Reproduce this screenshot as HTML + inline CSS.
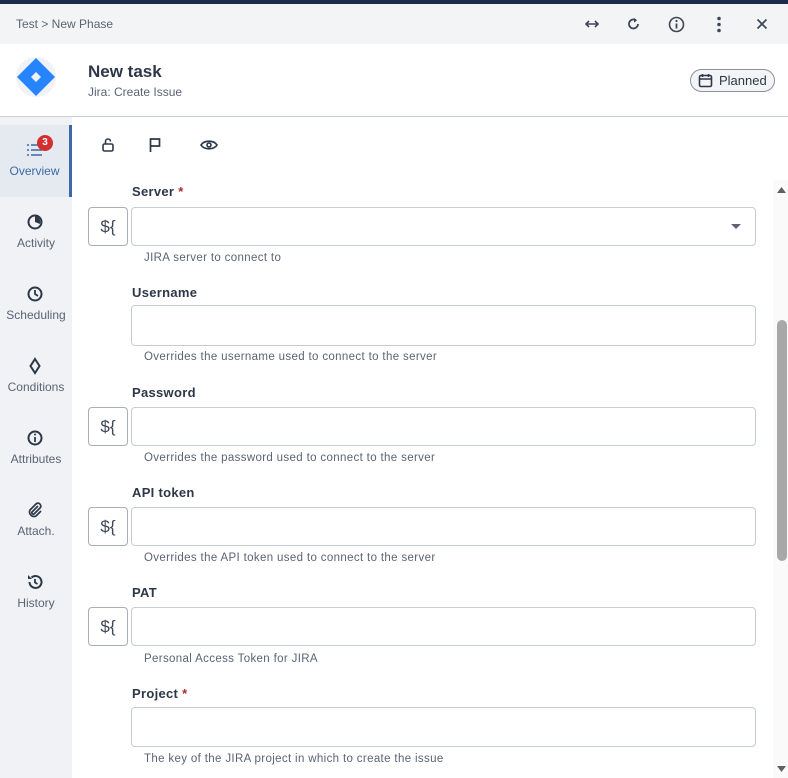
<!DOCTYPE html>
<html><head><style>
*{box-sizing:border-box;margin:0;padding:0}
body{width:788px;height:778px;overflow:hidden;font-family:"Liberation Sans",sans-serif;background:#fff;position:relative;color:#2d3748}
.top{position:absolute;left:0;top:0;width:788px;height:4px;background:#1c2b4b}
.crumb{position:absolute;top:4px;left:0;width:788px;height:40px;background:#f3f4f6;font-size:12px;color:#5a6474}
.crumb span{position:absolute;left:16px;top:13px}
.ic{position:absolute;top:14px}
.hdr{position:absolute;top:44px;left:0;width:788px;height:73px;border-bottom:1px solid #c9ced6;background:#fff}
.logo{position:absolute;left:16px;top:13px;width:40px;height:40px;border-radius:50%;background:#f0f2f5}
.title{position:absolute;left:88px;top:18px;font-size:17px;font-weight:bold;color:#2d3748}
.sub{position:absolute;left:88px;top:41px;font-size:12px;color:#5a6474}
.pill{position:absolute;left:690px;top:25px;width:85px;height:23px;border:1px solid #8a929e;border-radius:12px;background:#f3f4f6;font-size:13px;color:#2d3748}
.side{position:absolute;left:0;top:117px;width:72px;height:661px;background:#f0f2f5}
.item{position:absolute;left:0;width:72px;height:72px;text-align:center;font-size:12px;color:#5a6474}
.item svg{position:absolute;left:26px;top:16px}
.item span{position:absolute;left:0;right:0;top:39px}
.active{background:#e5eaf1;border-right:3px solid #3c68a8}
.lbl{position:absolute;left:132px;font-size:13px;font-weight:bold;color:#2d3748;letter-spacing:0.3px}
.lbl b{color:#b02a2a}
.inp{position:absolute;left:131px;width:625px;height:39px;border:1px solid #c6ccd4;border-radius:4px;background:#fff}
.help{position:absolute;left:144px;font-size:11.5px;color:#5a6474;letter-spacing:0.35px}
.ds{position:absolute;left:88px;width:40px;height:39px;border:1px solid #a7aeb8;border-radius:4px;font-size:17px;color:#3e4755;text-align:center;line-height:37px}
.sb{position:absolute;left:773px;top:180px;width:15px;height:598px;background:#fafafa}
.thumb{position:absolute;left:777px;top:320px;width:10px;height:241px;background:#a8a8a8;border-radius:5px}
</style></head><body>
<div class="top"></div>
<div class="crumb"><span>Test&nbsp;&gt;&nbsp;New Phase</span>
<svg class="ic" style="left:584px" width="16" height="12" viewBox="0 0 16 12"><path d="M2 6h12M5 3L2 6l3 3M11 3l3 3-3 3" stroke="#3e4755" stroke-width="1.6" fill="none"/></svg>
<svg class="ic" style="left:626px;top:12px" width="16" height="16" viewBox="0 0 16 16"><path d="M12 8a4.5 4.5 0 1 1-2-3.8" stroke="#3e4755" stroke-width="1.8" fill="none"/><path d="M8 2l3 2.5-3 2z" fill="#3e4755"/></svg>
<svg class="ic" style="left:668px;top:12px" width="17" height="17" viewBox="0 0 17 17"><circle cx="8.5" cy="8.5" r="7" stroke="#3e4755" stroke-width="1.6" fill="none"/><path d="M8.5 7.5v5" stroke="#3e4755" stroke-width="1.8"/><circle cx="8.5" cy="5" r="1.1" fill="#3e4755"/></svg>
<svg class="ic" style="left:716px;top:12px" width="6" height="17" viewBox="0 0 6 17"><circle cx="3" cy="2.5" r="1.8" fill="#3e4755"/><circle cx="3" cy="8.5" r="1.8" fill="#3e4755"/><circle cx="3" cy="14.5" r="1.8" fill="#3e4755"/></svg>
<svg class="ic" style="left:756px;top:14px" width="12" height="12" viewBox="0 0 12 12"><path d="M1.5 1.5l9 9M10.5 1.5l-9 9" stroke="#3e4755" stroke-width="1.7"/></svg>
</div>
<div class="hdr">
<div class="logo"><svg width="40" height="40" viewBox="0 0 40 40"><path d="M20 1L39 20 20 39 1 20z" fill="#2684ff"/><path d="M20 15l5 5-5 5-5-5z" fill="#f0f2f5"/></svg></div>
<div class="title">New task</div>
<div class="sub">Jira: Create Issue</div>
<div class="pill"><svg style="position:absolute;left:7px;top:3px" width="15" height="15" viewBox="0 0 15 15"><rect x="1.5" y="2.5" width="12" height="11" rx="1.5" stroke="#2d3748" stroke-width="1.6" fill="none"/><path d="M1.5 6h12M4.5 1v3M10.5 1v3" stroke="#2d3748" stroke-width="1.6"/></svg><span style="position:absolute;left:28px;top:3px">Planned</span></div>
</div>
<div class="side">
<div class="item active" style="top:8px"><svg width="18" height="18" viewBox="0 0 18 18"><path d="M1 4h2M5 4h11M1 9h2M5 9h11M1 14h2M5 14h11" stroke="#3c68a8" stroke-width="1.6"/></svg><div style="position:absolute;left:37px;top:10px;width:16px;height:16px;border-radius:50%;background:#d32f2f;color:#fff;font-size:10px;font-weight:bold;line-height:16px">3</div><span style="color:#3c68a8">Overview</span></div>
<div class="item" style="top:80px"><svg width="18" height="18" viewBox="0 0 18 18"><circle cx="9" cy="9" r="6.5" stroke="#2d3748" stroke-width="2" fill="none"/><path d="M9 9V3a6 6 0 0 1 5 8z" fill="#2d3748"/></svg><span>Activity</span></div>
<div class="item" style="top:152px"><svg width="18" height="18" viewBox="0 0 18 18"><circle cx="9" cy="9" r="6.5" stroke="#2d3748" stroke-width="2" fill="none"/><path d="M9 5v4l3 2" stroke="#2d3748" stroke-width="1.8" fill="none"/></svg><span>Scheduling</span></div>
<div class="item" style="top:224px"><svg width="18" height="18" viewBox="0 0 18 18"><path d="M9 2l4.5 7L9 16 4.5 9z" stroke="#2d3748" stroke-width="2" fill="none"/></svg><span>Conditions</span></div>
<div class="item" style="top:296px"><svg width="18" height="18" viewBox="0 0 18 18"><circle cx="9" cy="9" r="6.5" stroke="#2d3748" stroke-width="2" fill="none"/><path d="M9 8v5" stroke="#2d3748" stroke-width="1.8"/><circle cx="9" cy="5.5" r="1" fill="#2d3748"/></svg><span>Attributes</span></div>
<div class="item" style="top:368px"><svg width="18" height="18" viewBox="0 0 18 18"><path d="M12 5l-6 6a1.5 1.5 0 0 0 2 2l6.5-6.5a3 3 0 0 0-4-4L4 9a4.5 4.5 0 0 0 6 6l5-5" stroke="#2d3748" stroke-width="1.7" fill="none"/></svg><span>Attach.</span></div>
<div class="item" style="top:440px"><svg width="18" height="18" viewBox="0 0 18 18"><path d="M3.5 9a6 6 0 1 0 2-4.5" stroke="#2d3748" stroke-width="2" fill="none"/><path d="M2 2v4h4z" fill="#2d3748"/><path d="M9 6v3.5l2.5 1.5" stroke="#2d3748" stroke-width="1.8" fill="none"/></svg><span>History</span></div>
</div>
<svg style="position:absolute;left:101px;top:137px" width="14" height="16" viewBox="0 0 14 16"><rect x="2" y="7" width="10" height="7" rx="1.5" stroke="#2d3748" stroke-width="1.6" fill="none"/><path d="M4.5 7V4.5a2.5 2.5 0 0 1 5 0" stroke="#2d3748" stroke-width="1.6" fill="none"/></svg>
<svg style="position:absolute;left:148px;top:137px" width="14" height="16" viewBox="0 0 14 16"><path d="M2.5 15V2h9v7h-9" stroke="#2d3748" stroke-width="1.7" fill="none"/></svg>
<svg style="position:absolute;left:200px;top:138px" width="18" height="14" viewBox="0 0 18 14"><path d="M1 7c3-5 13-5 16 0-3 5-13 5-16 0z" stroke="#2d3748" stroke-width="1.7" fill="none"/><circle cx="9" cy="7" r="2" stroke="#2d3748" stroke-width="1.6" fill="none"/></svg>

<div class="lbl" style="top:184px">Server <b>*</b></div>
<div class="ds" style="top:207px">${</div>
<div class="inp" style="top:207px"><svg style="position:absolute;right:14px;top:16px" width="10" height="6"><path d="M0 0h10L5 5z" fill="#5a6474"/></svg></div>
<div class="help" style="top:252px">JIRA server to connect to</div>

<div class="lbl" style="top:285px">Username</div>
<div class="inp" style="top:305px;height:41px"></div>
<div class="help" style="top:351px">Overrides the username used to connect to the server</div>

<div class="lbl" style="top:385px">Password</div>
<div class="ds" style="top:407px">${</div>
<div class="inp" style="top:407px"></div>
<div class="help" style="top:452px">Overrides the password used to connect to the server</div>

<div class="lbl" style="top:485px">API token</div>
<div class="ds" style="top:507px">${</div>
<div class="inp" style="top:507px"></div>
<div class="help" style="top:552px">Overrides the API token used to connect to the server</div>

<div class="lbl" style="top:585px">PAT</div>
<div class="ds" style="top:607px">${</div>
<div class="inp" style="top:607px"></div>
<div class="help" style="top:653px">Personal Access Token for JIRA</div>

<div class="lbl" style="top:686px">Project <b>*</b></div>
<div class="inp" style="top:707px;height:40px"></div>
<div class="help" style="top:753px">The key of the JIRA project in which to create the issue</div>

<div class="sb"></div>
<svg style="position:absolute;left:777px;top:187px" width="9" height="6"><path d="M0 6h9L4.5 0z" fill="#606060"/></svg>
<div class="thumb"></div>
<svg style="position:absolute;left:777px;top:766px" width="9" height="6"><path d="M0 0h9L4.5 6z" fill="#606060"/></svg>
</body></html>
